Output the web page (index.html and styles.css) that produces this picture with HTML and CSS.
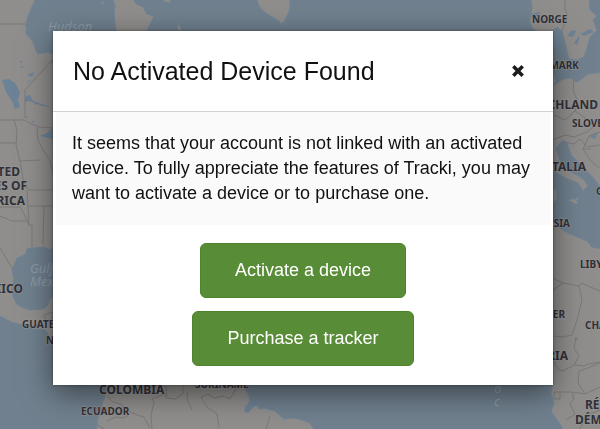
FILE: index.html
```html
<!DOCTYPE html>
<html lang="en">
<head>
<meta charset="utf-8">
<meta name="viewport" content="width=device-width, initial-scale=1">
<title>No Activated Device Found</title>
<link rel="stylesheet" href="styles.css">
</head>
<body>
<svg class="map" viewBox="0 0 600 429" preserveAspectRatio="xMidYMid slice" aria-hidden="true">
  <g class="land">
    <path d="M-2 -2H36L31 9L28 16L26 24L26 34L29 37L33 42L36 51L38 54L48 52L53 54L80 60V246L53 247L50 250L44 247L34 248L27 249L25 255L17 258L14 265L12 270L14 280L12 288L13 296L16 303L21 307L30 310L44 309L48 305L50 299L53 296L80 300V356L60 350L44 329L34 329L22 325L11 322L-2 315Z"/>
    <path d="M112 -2L115 5L114 15L116 31V34H150L147 31L150 24L154 16L147 14L143 7L136 4L133 -2ZM256 -2L260 8L267 14L274 18L279 21L280 24L284 22L287 16L290 8V-2ZM160 -2L165 2L170 3L171 -2ZM178 31L177 27L179 23L180 27L182 30ZM84 -2L86 1L88 -2ZM101 4L103 0L104 5Z"/>
    <path d="M103 380L106 388L105 396L102 404L101 412L98 418L96 431H315L310 423L302 420L295 418L284 419L275 411L264 408L259 409L257 405L253 407L248 413L244 411L250 401L248 393L242 385L236 375Z"/>
    <path d="M531 -2L532 8L530 16L530 23L533 29L540 34L552 31L557 27L562 31L565 43L569 59L577 60L584 57L587 48L590 37L597 30L593 20L597 16L590 10L589 -2Z"/>
    <path d="M540 62L552 65L556 82L553 86L563 79L571 78L577 82L588 74L602 72V190L596 181L587 171L578 162L571 155L567 143L563 140L556 148L560 161L569 171L579 176L585 181L588 186L583 191L578 183L570 180L560 175L540 160Z"/>
    <path d="M568 200L579 197L577 205ZM556 189L557 199L553 204V190ZM573 197L579 202L576 200Z"/>
    <path d="M540 222L552 222L557 225L561 229L568 233L577 237L587 241L592 247L602 249V431H564L558 421L551 411L554 403L551 393L553 381L540 380Z"/>
  </g>
  <g class="water">
    <path d="M2 80L9 79L15 83L20 92L18 100L20 107L15 109L12 101L6 92ZM26 96L30 95L33 101L42 104L50 107L42 106L35 103L29 101L24 102ZM27 75L34 72L32 77ZM27 81L33 80L28 82ZM19 61L23 61L21 63ZM20 66L25 67L21 68ZM50 62L55 60L53 64ZM34 103L38 103L35 105ZM25 116L29 117L26 118ZM31 121L35 121L33 123ZM40 136L47 133L53 128V139ZM27 128L29 127L28 129Z"/>
    <path d="M567 36L572 30L576 31L573 37ZM574 43L578 37L580 37L577 45ZM580 34L590 29L594 32L584 36ZM590 137L598 132L595 139ZM574 339L578 338L576 341Z"/>
    <path d="M531 14L541 12L538 16L531 17ZM556 27L558 35L563 49L557 48L553 40ZM244 407L253 400L259 402L250 409Z"/>
  </g>
  <g class="borders">
    <path d="M0 24H27M0 120H24L31 124L39 127L53 128M25 118V90L53 59M14 120L17 130L16 145L20 161L40 160M0 143H16M37 127L38 140L43 150L50 160L53 174M20 160L24 184L29 190H53M0 207H20L24 214L29 225H32V247M0 216L12 221H27M27 190L29 225M29 206H53M44 206L43 245M0 248L6 258L13 269M44 315L53 312L52 322L46 320Z"/>
    <path d="M565 0V10L567 14L565 22L562 31M574 79L573 90L577 100L575 111L584 117L592 124L600 122M575 111L565 120L554 115M552 140L565 135L574 137L587 132L597 124M565 142L574 144L580 139L587 147L600 145M583 149L590 160L599 168M600 132L589 136L583 149L591 149"/>
    <path d="M553 230L557 225M552 278L563 283L579 286L581 283L600 291M579 286L582 300L577 320L572 335L562 337L553 336M563 283L553 290M576 337L574 348L579 356L574 365L584 366L588 364L600 362M574 365L563 371L559 370L553 361M600 363L588 368L579 371L578 383L585 394L600 387M585 394L572 392H554V399H560V393M572 392L574 399L570 404L575 414L566 420M580 429L587 415L600 410"/>
    <path d="M108 397L113 402L121 404L128 411L137 415L144 417L150 428M152 429L151 415L154 402L152 399L165 394L166 398L176 399L183 393V384M166 386L167 396M187 391L188 401L192 410M201 397L208 394L214 398L223 396L230 399L238 385M201 397L207 407L217 414L219 427M107 421L116 417L124 418L130 414M97 425L104 429M266 429L270 416"/>
  </g>
  <g class="sea-names">
    <text x="48" y="31">Hudson</text>
    <text x="30" y="273">Gulf of</text>
    <text x="30" y="286">Mexico</text>
    <text x="494" y="393">o</text>
    <text x="494" y="406">c</text>
  </g>
  <g class="names">
    <text x="20" y="176" text-anchor="end">UNITED</text>
    <text x="27" y="190" text-anchor="end">STATES OF</text>
    <text x="25" y="205" text-anchor="end">AMERICA</text>
    <text x="23" y="293" text-anchor="end">MÉXICO</text>
    <text x="99" y="394">COLOMBIA</text>
    <text x="598" y="109" text-anchor="end">DEUTSCHLAND</text>
    <text x="586" y="171" text-anchor="end">ITALIA</text>
    <text x="568" y="360" text-anchor="end">NIGERIA</text>
    <text x="585" y="409">RÉP.</text>
    <text x="575" y="424">DÉM.</text>
  </g>
  <g class="names names-small">
    <text x="532" y="23">NORGE</text>
    <text x="579" y="69" text-anchor="end">DANMARK</text>
    <text x="572" y="127">SLOVENSKO</text>
    <text x="596" y="195">G</text>
    <text x="570" y="227" text-anchor="end">TUNISIA</text>
    <text x="580" y="268">LIBYA</text>
    <text x="565" y="318" text-anchor="end">NIGER</text>
    <text x="585" y="329">CHAD</text>
    <text x="22" y="328">GUATEMALA</text>
    <text x="46" y="344">NICARAGUA</text>
    <text x="81" y="415">ECUADOR</text>
    <text x="195" y="388">SURINAME</text>
  </g>
</svg>

<main class="backdrop">
  <section class="dialog" role="dialog" aria-modal="true" aria-labelledby="dialog-title">
    <header class="dialog-header">
      <h1 id="dialog-title">No Activated Device Found</h1>
      <button class="close" type="button" aria-label="Close">
        <svg viewBox="0 0 12 12" aria-hidden="true"><path d="M2 2L10 10M10 2L2 10"/></svg>
      </button>
    </header>
    <p class="dialog-text">It seems that your account is not linked with an activated device. To fully appreciate the features of Tracki, you may want to activate a device or to purchase one.</p>
    <div class="actions">
      <button class="action" type="button">Activate a device</button>
      <button class="action" type="button">Purchase a tracker</button>
    </div>
  </section>
</main>
</body>
</html>
```
FILE: styles.css
```css
* {
  box-sizing: border-box;
}

body {
  margin: 0;
  background: #70808e;
  font-family: "Liberation Sans", Arial, sans-serif;
  color: #111;
}

.map {
  position: fixed;
  inset: 0;
  width: 100%;
  height: 100%;
  background: #70808e;
}

.land {
  fill: #908e8c;
  stroke: #6f8497;
  stroke-width: 1;
}

.water {
  fill: #6c8296;
}

.borders {
  fill: none;
  stroke: #7b7877;
  stroke-width: 1;
}

.names {
  fill: #303038;
  stroke: #9a9896;
  stroke-width: 1;
  paint-order: stroke;
  font: bold 12px "Noto Sans", sans-serif;
}

.names-small {
  font-size: 10px;
}

.sea-names {
  fill: #8a99a7;
  font: italic 13px "Noto Sans", sans-serif;
}

.backdrop {
  position: relative;
  padding: 31px 47px 44px 53px;
}

.dialog {
  background: #fff;
  box-shadow: 0 8px 28px rgba(0, 0, 0, 0.5), 0 0 3px rgba(0, 0, 0, 0.4);
}

.dialog-header {
  display: flex;
  align-items: center;
  justify-content: space-between;
  padding: 25px 28px 25px 20px;
  border-bottom: 1px solid #d2d2d2;
}

h1 {
  margin: 0;
  font-size: 25px;
  font-weight: 400;
  line-height: 30px;
}

.close {
  display: flex;
  padding: 0;
  border: 0;
  background: none;
  cursor: pointer;
}

.close svg {
  width: 14px;
  height: 14px;
  fill: none;
  stroke: #1c1c1c;
  stroke-width: 3;
}

.dialog-text {
  margin: 0 3px;
  padding: 19px 16px;
  background: #fafafa;
  font-size: 18px;
  line-height: 25px;
}

.actions {
  display: flex;
  flex-direction: column;
  align-items: center;
  gap: 13px;
  padding: 18px 20px 19px;
}

.action {
  height: 55px;
  padding: 0 34px;
  border: 1px solid #4c842c;
  border-radius: 6px;
  background: #588c36;
  color: #fff;
  font: 18px "Liberation Sans", Arial, sans-serif;
  cursor: pointer;
}
```
